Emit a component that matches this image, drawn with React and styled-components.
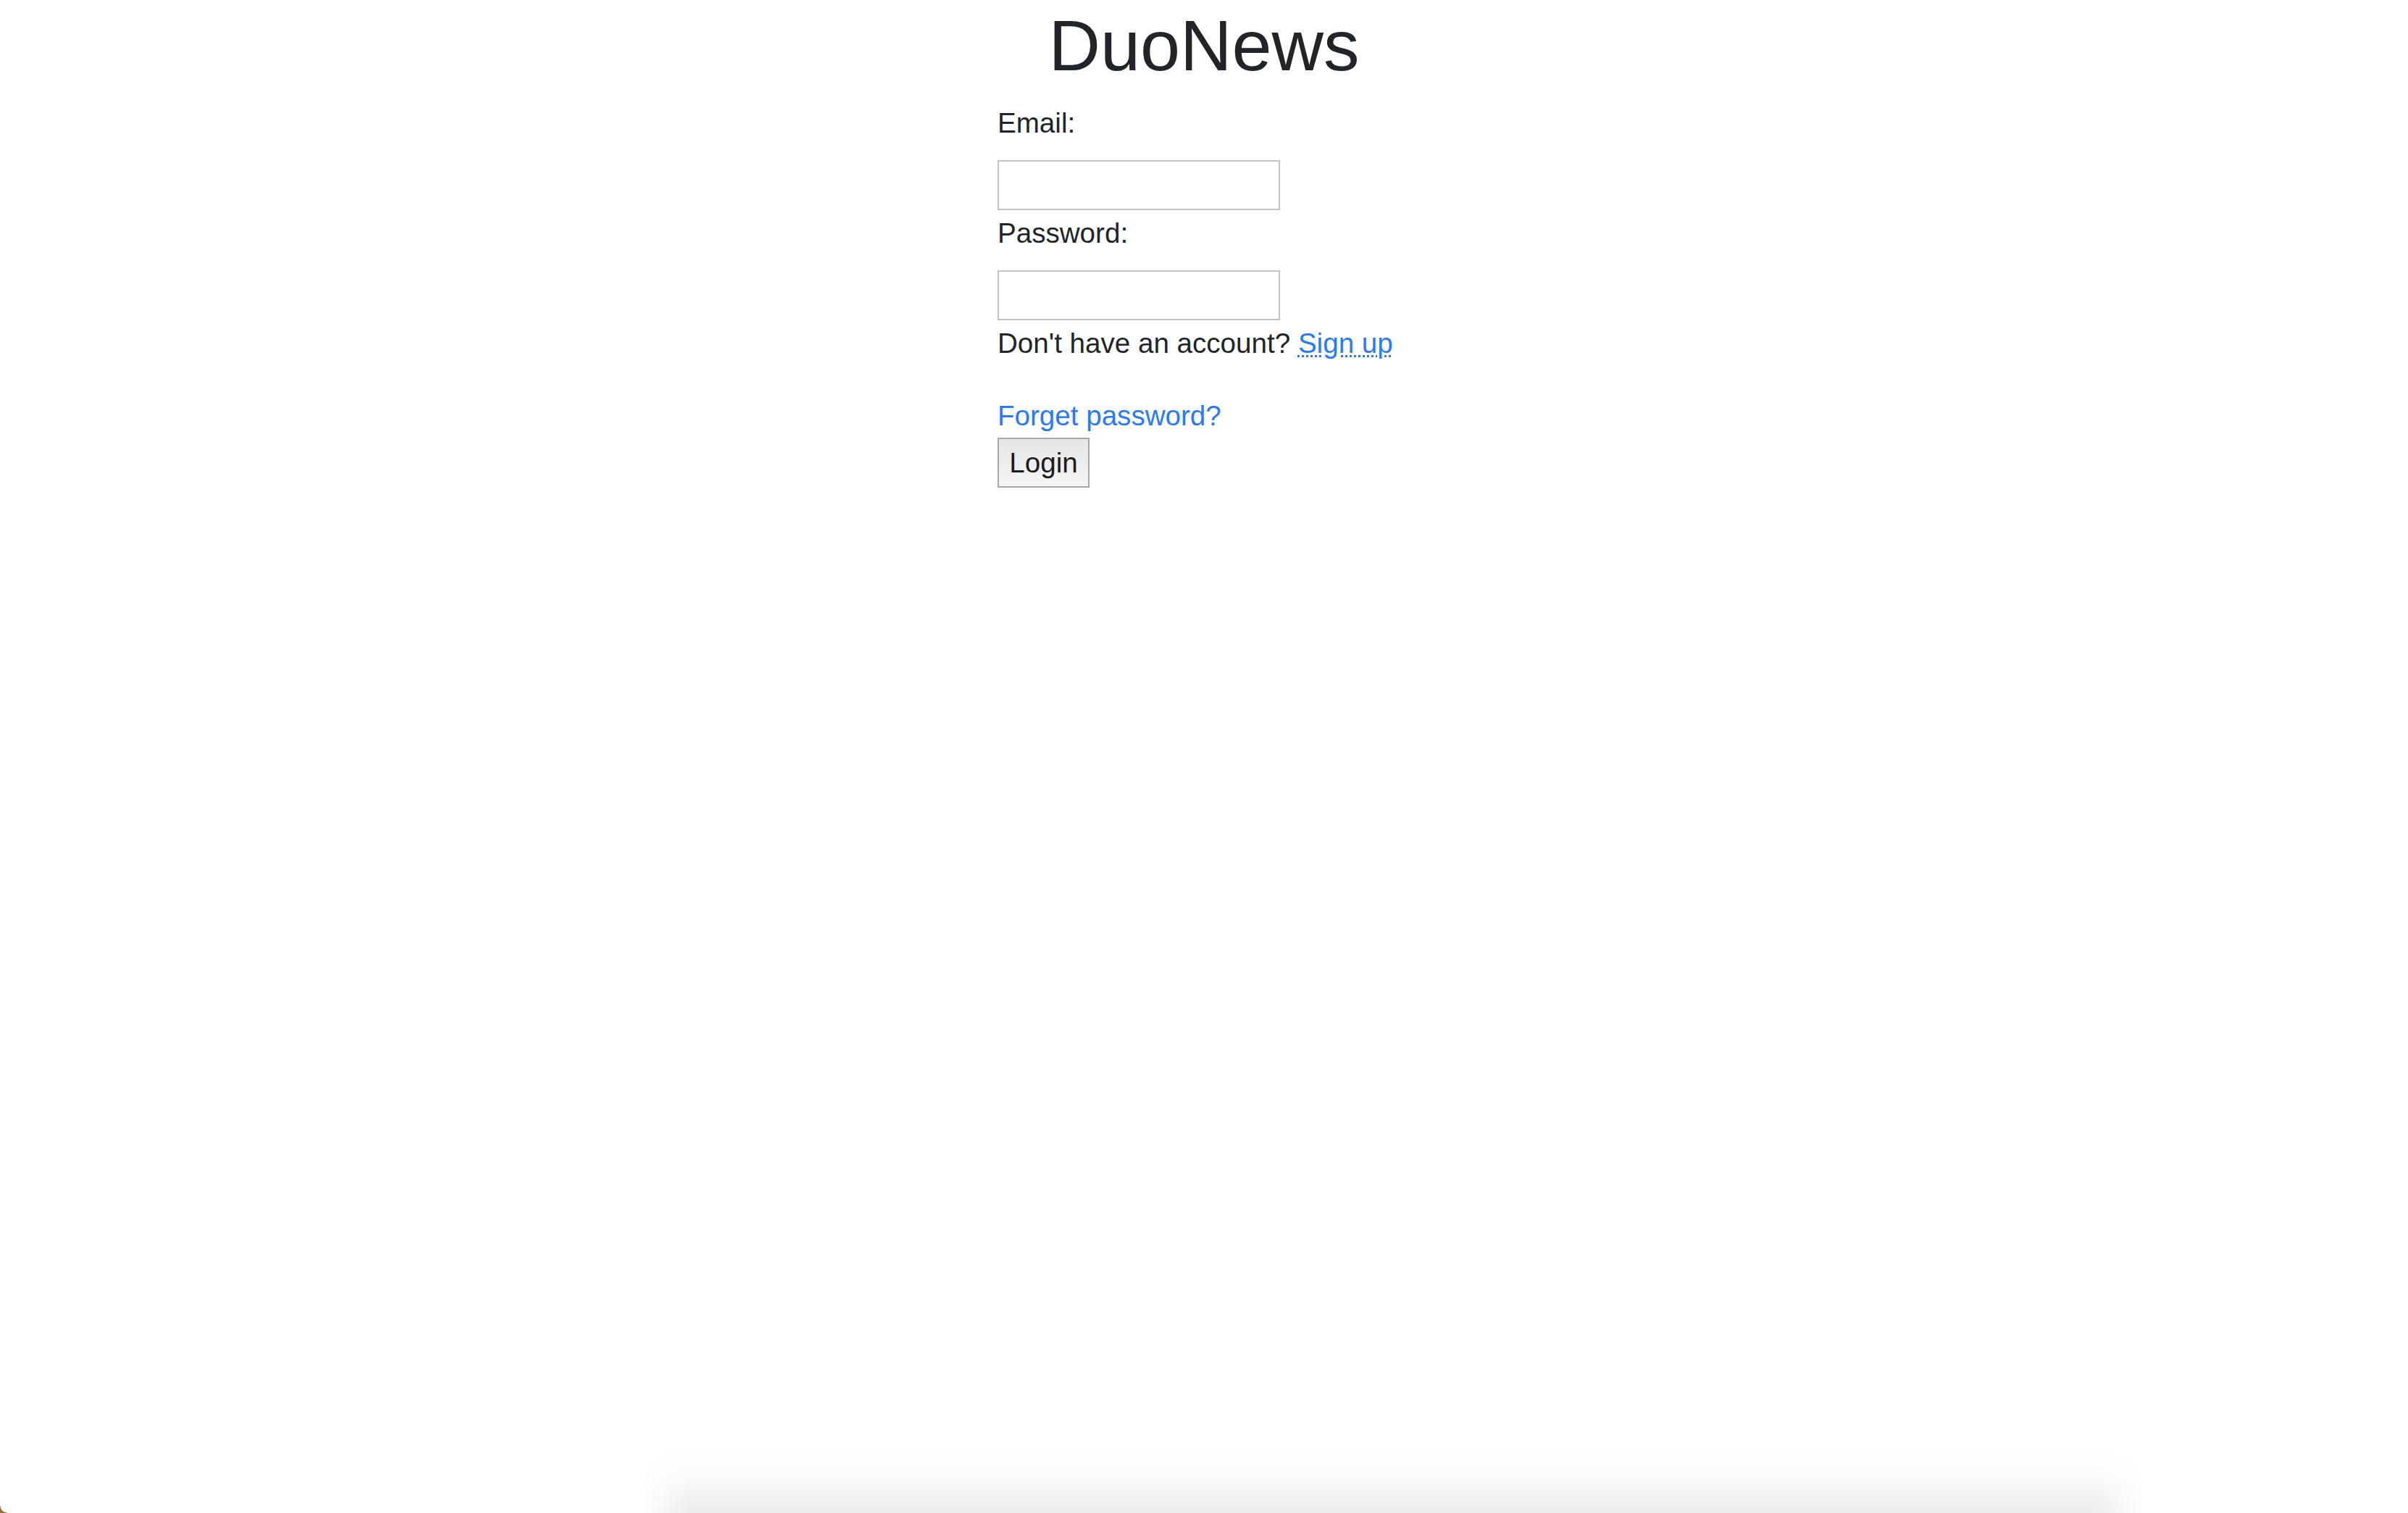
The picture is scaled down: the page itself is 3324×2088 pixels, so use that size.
import React from "react";
import styled, { createGlobalStyle } from "styled-components";

const GlobalStyle = createGlobalStyle`
  html, body {
    margin: 0;
    padding: 0;
    background: #ffffff;
  }
  body {
    font-family: "Liberation Sans", Arial, sans-serif;
    color: #212529;
  }
`;

const Page = styled.div`
  min-height: 2088px;
  box-sizing: border-box;
`;

const Title = styled.h1`
  margin: 0;
  padding-top: 3px;
  font-size: 99px;
  line-height: 119px;
  font-weight: 400;
  text-align: center;
  color: #212529;
`;

const Form = styled.form`
  width: 570px;
  margin: 0 auto;
  display: flex;
  flex-direction: column;
  align-items: flex-start;
`;

const Label = styled.label`
  display: block;
  margin-top: ${(p) => p.$top}px;
  font-size: 38.6px;
  line-height: 56px;
  color: #212529;
`;

const Input = styled.input`
  display: block;
  box-sizing: border-box;
  width: 390px;
  height: 69px;
  margin-top: 23px;
  padding: 0 8px;
  border: 2px solid #c4c4c4;
  border-radius: 0;
  background: #ffffff;
  font-size: 32px;
  outline: none;
`;

const Line = styled.p`
  margin: ${(p) => p.$top}px 0 0;
  font-size: 38.6px;
  line-height: 56px;
  color: #212529;
`;

const Link = styled.a`
  color: #2a7af5;
  text-decoration: ${(p) => (p.$dotted ? "underline dotted" : "none")};
  text-decoration-thickness: 3px;
  text-underline-offset: 3px;
  cursor: pointer;
`;

const Button = styled.button`
  box-sizing: border-box;
  width: 127px;
  height: 69px;
  margin-top: 2px;
  padding: 0;
  border: 2px solid #a8a8a8;
  border-radius: 0;
  background: linear-gradient(#e6e6e6, #f4f4f4);
  font-family: "Liberation Sans", Arial, sans-serif;
  font-size: 38.6px;
  color: #1b1b1b;
  display: flex;
  align-items: center;
  justify-content: center;
`;

// window shadow at the bottom of the screenshot
const DockShadow = styled.div`
  position: fixed;
  left: 884px;
  bottom: 0;
  width: 2076px;
  height: 90px;
  pointer-events: none;
  background: linear-gradient(
    to bottom,
    rgba(0, 0, 0, 0) 0%,
    rgba(0, 0, 0, 0.015) 40%,
    rgba(0, 0, 0, 0.075) 100%
  );
  -webkit-mask-image: linear-gradient(
    to right,
    transparent 0,
    #000 70px,
    #000 calc(100% - 70px),
    transparent 100%
  );
  mask-image: linear-gradient(
    to right,
    transparent 0,
    #000 70px,
    #000 calc(100% - 70px),
    transparent 100%
  );
`;

const Corner = styled.div`
  position: fixed;
  left: 0;
  bottom: 0;
  width: 10px;
  height: 10px;
  pointer-events: none;
  background: radial-gradient(
    circle at 10px 0,
    transparent 9px,
    #9c6c3c 10px
  );
`;

export default function App() {
  return (
    <Page>
      <GlobalStyle />
      <Title>DuoNews</Title>
      <Form onSubmit={(e) => e.preventDefault()}>
        <Label $top={20} htmlFor="email">
          Email:
        </Label>
        <Input id="email" type="email" />
        <Label $top={4} htmlFor="password">
          Password:
        </Label>
        <Input id="password" type="password" />
        <Line $top={4}>
          Don't have an account? <Link $dotted>Sign up</Link>
        </Line>
        <Line $top={44}>
          <Link>Forget password?</Link>
        </Line>
        <Button type="submit">Login</Button>
      </Form>
      <DockShadow />
      <Corner />
    </Page>
  );
}
